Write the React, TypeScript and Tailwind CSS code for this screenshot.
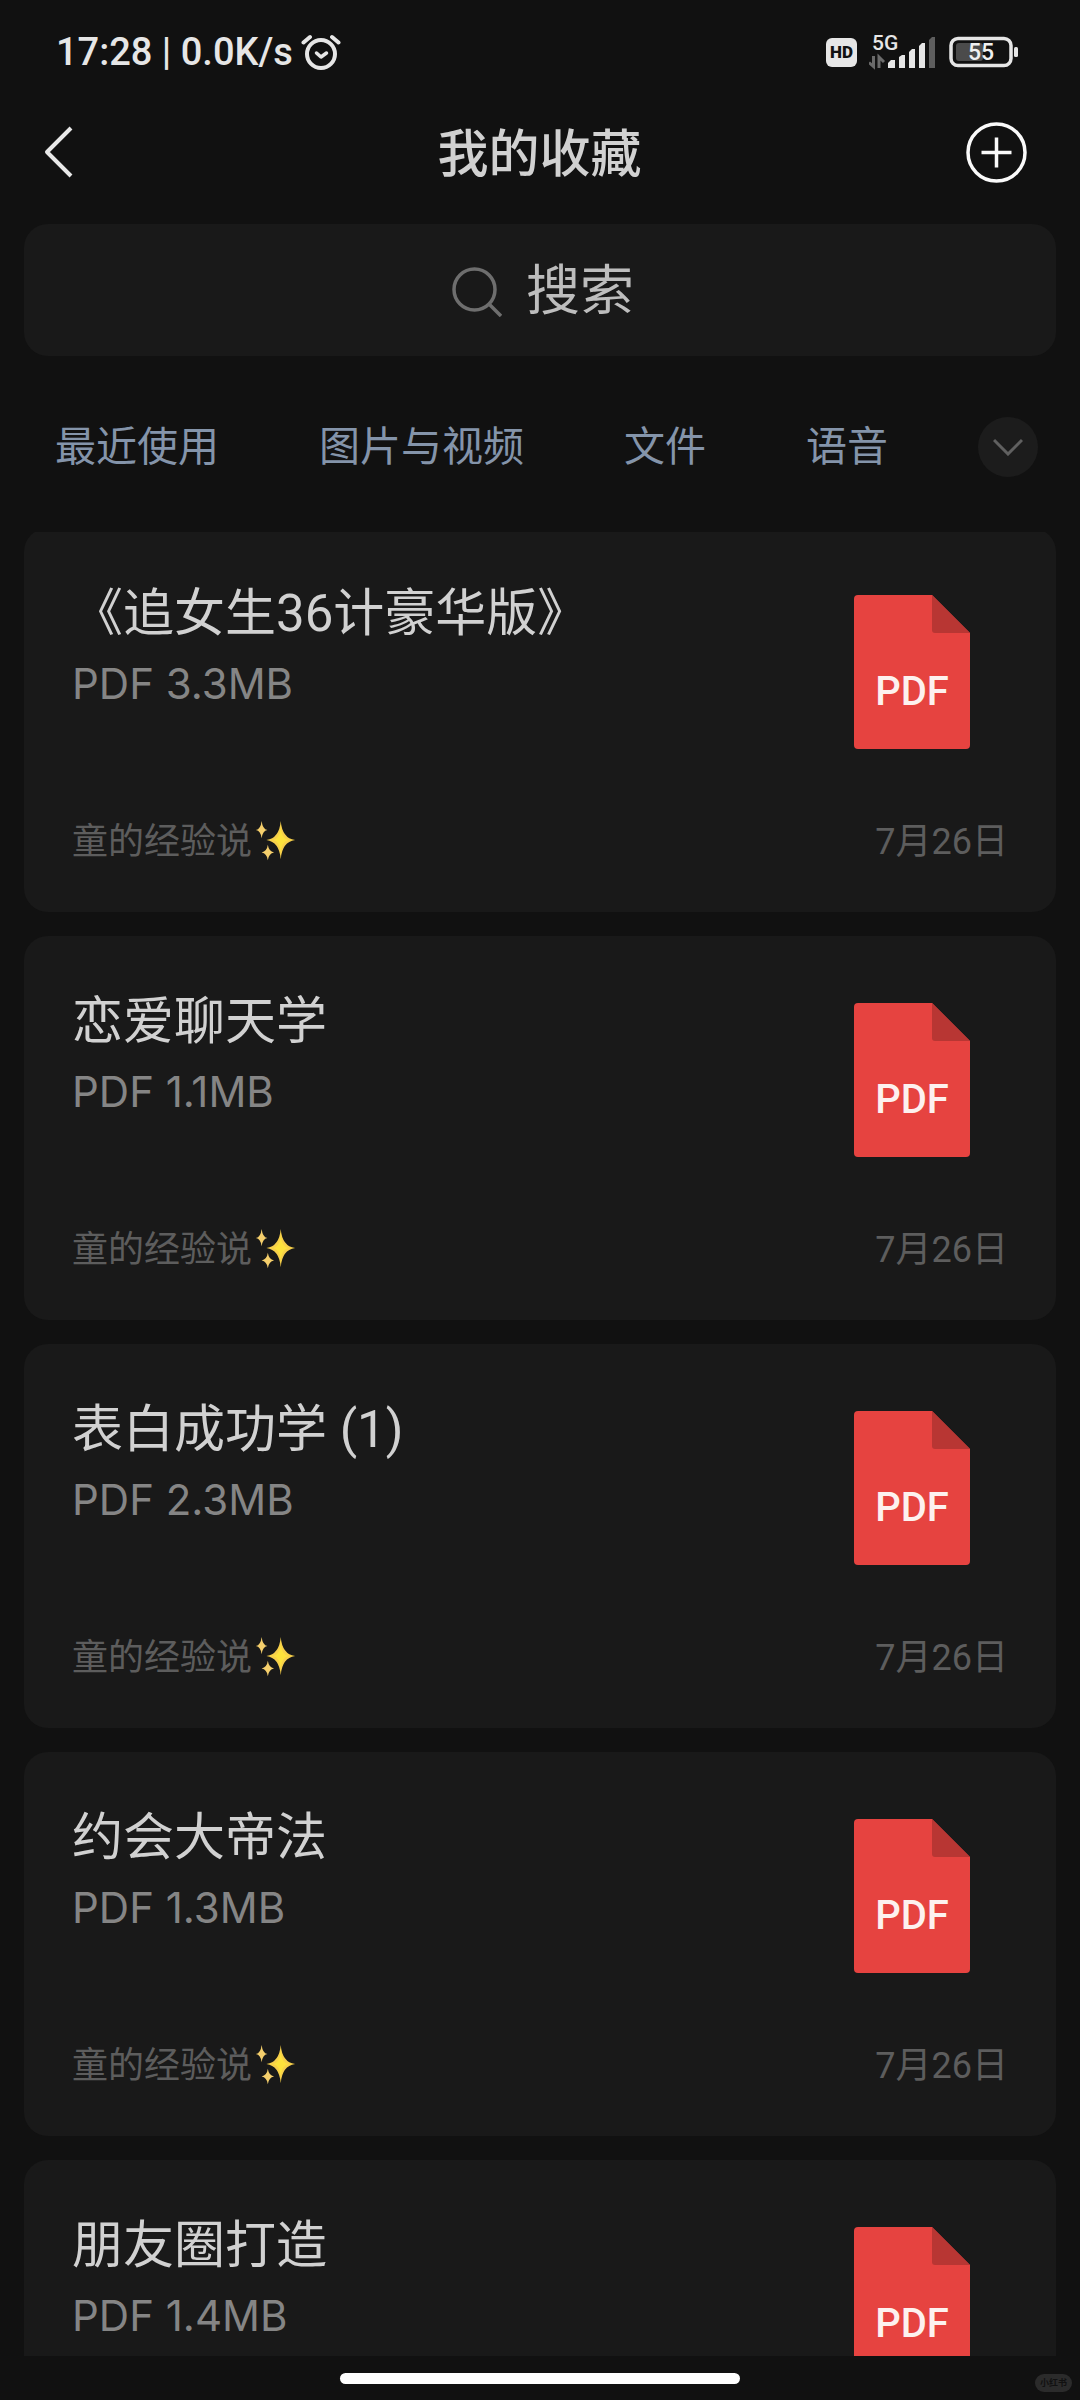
import React from "react";

interface Favorite {
  title: string;
  size: string;
  author: string;
  date: string;
}

const favorites: Favorite[] = [
  { title: "《追女生36计豪华版》", size: "3.3MB", author: "童的经验说", date: "7月26日" },
  { title: "恋爱聊天学", size: "1.1MB", author: "童的经验说", date: "7月26日" },
  { title: "表白成功学 (1)", size: "2.3MB", author: "童的经验说", date: "7月26日" },
  { title: "约会大帝法", size: "1.3MB", author: "童的经验说", date: "7月26日" },
  { title: "朋友圈打造", size: "1.4MB", author: "童的经验说", date: "7月26日" },
];

const categories = ["最近使用", "图片与视频", "文件", "语音"];

function AlarmIcon() {
  return (
    <svg width="40" height="38" viewBox="0 0 40 38" fill="none" stroke="#e6e6e6" strokeWidth="4" strokeLinecap="round" aria-hidden="true">
      <circle cx="20" cy="21" r="14" />
      <path d="M2.5 9.5 9 4M37.500 9.500 31 4" />
      <path d="m15.500 20 4.500 4 5.500-4" strokeWidth="3.500" strokeLinejoin="round" />
    </svg>
  );
}

function SignalIcon() {
  return (
    <svg width="68" height="48" viewBox="0 -6 68 48" aria-hidden="true">
      <text x="3" y="16" fontSize="21" fontWeight="500" fill="#e6e6e6">5G</text>
      <path d="M4.500 32V22M0 28.500l4.500 4V28M10 34V23l5 5" stroke="#6b6b6b" strokeWidth="3" fill="none" />
      <g fill="#e6e6e6">
        <path d="M19 34v-5l3-3h4v8z" />
        <path d="M30 34V23l3-2h3v13z" />
        <path d="M40 34V18l3-3h3v19z" />
        <path d="M50 34V12l3-3h3v25z" />
      </g>
      <path d="M60 34V6l3-3h3v31z" fill="#5e5e5e" />
    </svg>
  );
}

function BatteryIcon() {
  return (
    <svg width="70" height="32" viewBox="0 0 70 32" aria-hidden="true">
      <rect x="2" y="2.500" width="60" height="27" rx="7" fill="none" stroke="#e6e6e6" strokeWidth="3.500" />
      <rect x="7" y="7" width="27" height="18" rx="3" fill="#4b4b4b" />
      <rect x="65" y="11" width="4" height="10" rx="1.500" fill="#e6e6e6" />
      <text x="32" y="24" fontSize="23" fontWeight="500" textAnchor="middle" fill="#f0f0f0">55</text>
    </svg>
  );
}

function Sparkles() {
  return (
    <svg width="42" height="42" viewBox="0 1 44 44" role="img" aria-label="✨">
      <path d="M28 1Q29.500 19 43 21Q29.500 23 28 41Q26.500 23 13 21Q26.500 19 28 1Z" fill="#f7d04a" />
      <path d="M28 8Q29 19.500 36 21Q29 22.500 28 34Q27 22.500 20 21Q27 19.500 28 8Z" fill="#fde23c" />
      <path d="M8 1Q9 9.500 14 10.500Q9 11.500 8 19Q7 11.500 2 10.500Q7 9.500 8 1Z" fill="#f5cf6c" />
      <path d="M14.500 26Q15.500 33 21 34Q15.500 35 14.500 42Q13.500 35 8 34Q13.500 33 14.500 26Z" fill="#f5cf6c" />
    </svg>
  );
}

function PdfIcon() {
  return (
    <svg width="116" height="154" viewBox="0 0 116 154" role="img" aria-label="PDF">
      <path d="M4 0H78L116 38V150a4 4 0 0 1-4 4H4a4 4 0 0 1-4-4V4a4 4 0 0 1 4-4Z" fill="#e64340" />
      <path d="M78 0 116 38H81a3 3 0 0 1-3-3Z" fill="#b83633" />
      <text x="58" y="110" fontSize="40" fontWeight="500" textAnchor="middle" fill="#fdf1ef">PDF</text>
    </svg>
  );
}

function StatusBar() {
  return (
    <div className="flex h-[104px] shrink-0 items-center justify-between pl-14 pr-[61px] text-[#e6e6e6]">
      <div className="flex items-center gap-2">
        <span className="text-[38px] font-medium leading-none">17:28 | 0.0K/s</span>
        <AlarmIcon />
      </div>
      <div className="flex items-center gap-3">
        <span className="flex h-[29px] w-[31px] items-center justify-center rounded-md bg-[#e6e6e6] text-[17px] font-black leading-none text-[#111111]">
          HD
        </span>
        <SignalIcon />
        <BatteryIcon />
      </div>
    </div>
  );
}

function FavoriteCard({ title, size, author, date }: Favorite) {
  return (
    <li className="flex h-96 shrink-0 flex-col justify-between rounded-3xl bg-[#191919] px-12 pb-12">
      <div className="flex justify-between pr-[38px]">
        <div className="pt-[50px]">
          <h2 className="text-[51px] leading-[72px] text-[#d1d1d1]">{title}</h2>
          <p className="font-['Inter',sans-serif] text-[42px] leading-[68px] text-[#858585]">PDF {size}</p>
        </div>
        <div className="shrink-0 pt-[67px]">
          <PdfIcon />
        </div>
      </div>
      <div className="flex items-center justify-between text-[36px] leading-[44px] text-[#5d5d5d]">
        <span className="flex items-center gap-0.5">
          {author}
          <Sparkles />
        </span>
        <time>{date}</time>
      </div>
    </li>
  );
}

export default function App() {
  return (
    <div className="flex h-screen flex-col overflow-hidden bg-[#111111] font-['Roboto','Noto_Sans_CJK_SC',sans-serif]">
      <StatusBar />

      <header className="flex h-24 shrink-0 items-center justify-between pl-11 pr-[53px]">
        <button type="button" aria-label="返回" className="w-[69px]">
          <svg width="30" height="52" viewBox="0 0 30 52" fill="none" stroke="#e8e8e8" strokeWidth="4" strokeLinejoin="round">
            <path d="M27 2 3 26 27 50" />
          </svg>
        </button>
        <h1 className="pt-1 text-[51px] font-medium leading-none text-[#d1d1d1]">我的收藏</h1>
        <button type="button" aria-label="添加">
          <svg width="61" height="61" viewBox="0 0 61 61" fill="none" stroke="#fafafa" strokeWidth="3.500">
            <circle cx="30.500" cy="30.500" r="28.500" />
            <path d="M30.500 15.500v30M15.500 30.500h30" />
          </svg>
        </button>
      </header>

      <label className="mx-6 mt-6 flex h-[132px] shrink-0 items-center justify-center gap-6 rounded-3xl bg-[#191919] pl-2 pt-1">
        <svg width="50" height="50" viewBox="0 0 50 50" fill="none" stroke="#6e6e6e" strokeWidth="3.500" aria-hidden="true">
          <circle cx="22.500" cy="22.500" r="20.500" />
          <path d="M37 37 49 49" />
        </svg>
        <input
          type="text"
          aria-label="搜索"
          placeholder="搜索"
          className="w-[110px] bg-transparent text-[54px] leading-[80px] text-[#c4c4c4] outline-none placeholder:text-[#bdbdbd]"
        />
      </label>

      <nav className="flex h-44 shrink-0 items-center justify-between pl-[55px] pr-[42px] pt-1.5">
        <div className="flex gap-[100px]">
          {categories.map((name) => (
            <button key={name} type="button" className="text-[41px] leading-[60px] text-[#8494aa]">
              {name}
            </button>
          ))}
        </div>
        <button type="button" aria-label="更多" className="flex size-[60px] items-center justify-center rounded-full bg-[#1c1c1c]">
          <svg width="30" height="18" viewBox="0 0 30 18" fill="none" stroke="#606060" strokeWidth="3">
            <path d="M1 2 15 16 29 2" />
          </svg>
        </button>
      </nav>

      <main className="min-h-0 flex-1 overflow-hidden px-6">
        <ul className="-mt-1 flex flex-col gap-6">
          {favorites.map((item) => (
            <FavoriteCard key={item.title} {...item} />
          ))}
        </ul>
      </main>

      <footer className="relative flex h-11 shrink-0 items-center justify-center">
        <div className="h-[11px] w-[400px] rounded-full bg-white" />
        <span className="absolute bottom-2 right-2 flex h-[18px] w-[37px] items-center justify-center rounded-full bg-[#2b2b2b] text-[9px] font-bold leading-none text-[#111111]">
          小红书
        </span>
      </footer>
    </div>
  );
}
